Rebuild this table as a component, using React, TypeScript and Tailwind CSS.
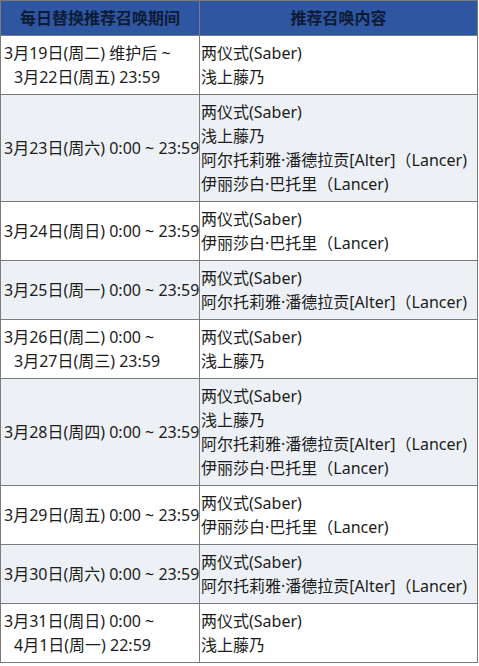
const font = { fontFamily: '"Noto Sans", "Noto Sans CJK SC", sans-serif' };

type Row = { date: string[]; items: string[] };

const rows: Row[] = [
  { date: ['3月19日(周二) 维护后 ~', '3月22日(周五) 23:59'], items: ['两仪式(Saber)', '浅上藤乃'] },
  {
    date: ['3月23日(周六) 0:00 ~ 23:59'],
    items: ['两仪式(Saber)', '浅上藤乃', '阿尔托莉雅·潘德拉贡[Alter]（Lancer)', '伊丽莎白·巴托里（Lancer)'],
  },
  { date: ['3月24日(周日) 0:00 ~ 23:59'], items: ['两仪式(Saber)', '伊丽莎白·巴托里（Lancer)'] },
  { date: ['3月25日(周一) 0:00 ~ 23:59'], items: ['两仪式(Saber)', '阿尔托莉雅·潘德拉贡[Alter]（Lancer)'] },
  { date: ['3月26日(周二) 0:00 ~', '3月27日(周三) 23:59'], items: ['两仪式(Saber)', '浅上藤乃'] },
  {
    date: ['3月28日(周四) 0:00 ~ 23:59'],
    items: ['两仪式(Saber)', '浅上藤乃', '阿尔托莉雅·潘德拉贡[Alter]（Lancer)', '伊丽莎白·巴托里（Lancer)'],
  },
  { date: ['3月29日(周五) 0:00 ~ 23:59'], items: ['两仪式(Saber)', '伊丽莎白·巴托里（Lancer)'] },
  { date: ['3月30日(周六) 0:00 ~ 23:59'], items: ['两仪式(Saber)', '阿尔托莉雅·潘德拉贡[Alter]（Lancer)'] },
  { date: ['3月31日(周日) 0:00 ~', '4月1日(周一) 22:59'], items: ['两仪式(Saber)', '浅上藤乃'] },
];

export default function App() {
  return (
    <div className="bg-white w-[479px] h-[666px]" style={font}>
      <table className="border-collapse w-[478px] table-fixed text-[16px] leading-[24px] text-[#1c1c1c]">
        <colgroup>
          <col className="w-[199px]" />
          <col />
        </colgroup>
        <thead>
          <tr className="bg-[#2f56a1] h-[35px]">
            <th className="border border-[#7b7b7b] font-bold text-[#0e1b36] text-center">每日替换推荐召唤期间</th>
            <th className="border border-[#7b7b7b] font-bold text-[#0e1b36] text-center">推荐召唤内容</th>
          </tr>
        </thead>
        <tbody>
          {rows.map((row, i) => (
            <tr key={i} className={i % 2 === 1 ? 'bg-[#edf1f5]' : 'bg-white'}>
              <td className="border border-[#7b7b7b] align-middle pl-[3px] pr-0 whitespace-nowrap">
                {row.date.map((line, j) => (
                  <div key={j} className={j > 0 ? 'pl-[10px]' : ''}>
                    {line}
                  </div>
                ))}
              </td>
              <td className="border border-[#7b7b7b] align-top pt-[5px] pb-[5px] pl-[1px] whitespace-nowrap">
                {row.items.map((item, j) => (
                  <div key={j}>{item}</div>
                ))}
              </td>
            </tr>
          ))}
        </tbody>
      </table>
    </div>
  );
}
